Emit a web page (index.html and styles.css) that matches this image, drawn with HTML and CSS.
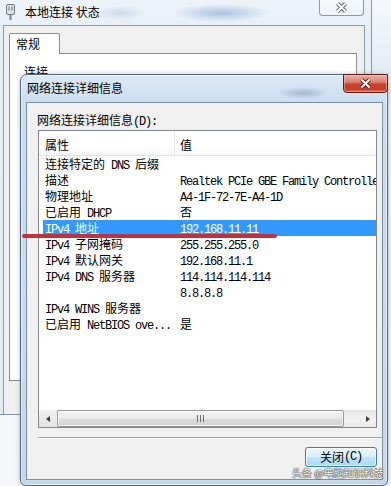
FILE: index.html
```html
<!DOCTYPE html>
<html lang="zh-CN">
<head>
<meta charset="utf-8">
<title>网络连接详细信息</title>
<link rel="stylesheet" href="styles.css">
</head>
<body>
  <section class="win back">
    <header class="tbar">
      <svg class="ticon" width="9" height="16" viewBox="0 0 9 16"><rect x="0.5" y="0.5" width="8" height="10" rx="1.5" fill="#dde1e6" stroke="#6f7780"/><rect x="2.5" y="2.5" width="1" height="4" fill="#6f7780"/><rect x="5.5" y="2.5" width="1" height="4" fill="#6f7780"/><rect x="3.5" y="11" width="2" height="5" fill="#7d858e"/></svg>
      <span class="ttext">本地连接 状态</span>
      <div class="xbtn inactive"><svg width="13" height="11" viewBox="0 0 13 11"><path d="M2.5 1.5 L10.5 9.5 M10.5 1.5 L2.5 9.5" stroke="#6a6a6a" stroke-width="4"/><path d="M2.5 1.5 L10.5 9.5 M10.5 1.5 L2.5 9.5" stroke="#fff" stroke-width="2"/></svg></div>
    </header>
    <div class="client">
      <div class="tabs"><div class="tab">常规</div></div>
      <div class="panel"><div class="grp">连接</div></div>
    </div>
  </section>

  <section class="win front">
    <header class="tbar">
      <span class="ttext">网络连接详细信息</span>
      <div class="xbtn red"><svg width="13" height="11" viewBox="0 0 13 11"><path d="M2.5 1.5 L10.5 9.5 M10.5 1.5 L2.5 9.5" stroke="#6b2018" stroke-width="4"/><path d="M2.5 1.5 L10.5 9.5 M10.5 1.5 L2.5 9.5" stroke="#fff" stroke-width="2"/></svg></div>
    </header>
    <div class="client">
      <div class="lbl">网络连接详细信息<span class="m">(D):</span></div>
      <div class="list">
        <div class="lhead"><div class="c1">属性</div><div class="c2">值</div></div>
        <div class="rows">
          <div class="row"><div class="c1">连接特定的<span class="m"> DNS </span>后缀</div><div class="c2"></div></div>
          <div class="row"><div class="c1">描述</div><div class="c2"><span class="m">Realtek PCIe GBE Family Controller</span></div></div>
          <div class="row"><div class="c1">物理地址</div><div class="c2"><span class="m">A4-1F-72-7E-A4-1D</span></div></div>
          <div class="row"><div class="c1">已启用<span class="m"> DHCP</span></div><div class="c2">否</div></div>
          <div class="row sel"><div class="c1"><span class="m">IPv4 </span>地址</div><div class="c2"><span class="m">192.168.11.11</span></div></div>
          <div class="row"><div class="c1"><span class="m">IPv4 </span>子网掩码</div><div class="c2"><span class="m">255.255.255.0</span></div></div>
          <div class="row"><div class="c1"><span class="m">IPv4 </span>默认网关</div><div class="c2"><span class="m">192.168.11.1</span></div></div>
          <div class="row"><div class="c1"><span class="m">IPv4 DNS </span>服务器</div><div class="c2"><span class="m">114.114.114.114</span></div></div>
          <div class="row"><div class="c1"></div><div class="c2"><span class="m">8.8.8.8</span></div></div>
          <div class="row"><div class="c1"><span class="m">IPv4 WINS </span>服务器</div><div class="c2"></div></div>
          <div class="row"><div class="c1">已启用<span class="m"> NetBIOS ove...</span></div><div class="c2">是</div></div>
        </div>
        <div class="hscroll">
          <div class="sbtn"><span class="tri left"></span></div>
          <div class="thumb"><span class="grip"></span></div>
          <div class="track"></div>
          <div class="sbtn"><span class="tri right"></span></div>
        </div>
      </div>
      <div class="sep"></div>
      <div class="foot"><div class="btn">关闭<span class="m">(C)</span></div></div>
    </div>
  </section>

  <div class="redline"></div>
  <div class="wm">头条 @电脑知识科技</div>
</body>
</html>
```
FILE: styles.css
```css
* { box-sizing: border-box; }
html, body { margin: 0; padding: 0; }
body {
  width: 391px;
  height: 486px;
  overflow: hidden;
  position: relative;
  background: linear-gradient(180deg, #f6f9fc 0px, #e3ecf4 70px, #f3f5f7 120px, #f5f6f7 100%);
  font-family: "Noto Sans CJK SC", sans-serif;
  font-size: 12px;
  color: #000;
}
.m {
  font-family: "Liberation Mono", monospace;
  font-size: 12px;
  letter-spacing: -1.2px;
}

/* windows */
.win {
  position: absolute;
  display: flex;
  flex-direction: column;
}
.tbar {
  position: relative;
  display: flex;
  align-items: flex-start;
  flex: none;
}
.ttext { line-height: 16px; white-space: nowrap; }

.xbtn {
  position: absolute;
  width: 45px;
  display: flex;
  align-items: center;
  justify-content: center;
  border-radius: 0 0 4px 4px;
}
.xbtn.inactive {
  top: 0;
  right: 7px;
  height: 21px;
  padding-top: 5px;
  border: 1px solid #8e99a5;
  border-top: none;
  background: linear-gradient(180deg, rgba(255,255,255,.6), rgba(240,245,250,.9));
}
.xbtn.red {
  top: -1px;
  right: -1px;
  height: 19px;
  border: 1px solid #5e1c15;
  background: linear-gradient(180deg, #eab0a2 0%, #dc8473 40%, #c8442f 55%, #c2402c 80%, #d5664f 100%);
  box-shadow: inset 0 0 0 1px rgba(255,210,200,.45);
}

/* back window */
.back {
  left: -5px;
  top: -6px;
  width: 377px;
  height: 421px;
  border: 1px solid #8796a6;
  border-radius: 6px;
  background: linear-gradient(180deg, #eef4fa 0%, #e6eef6 10%, #e3ecf5 100%);
}
.back .tbar {
  height: 30px;
  padding: 8px 0 0 10px;
  background:
    radial-gradient(ellipse 48px 9px at 225px 18px, rgba(150,180,215,.75), rgba(150,180,215,0)),
    radial-gradient(ellipse 24px 7px at 125px 18px, rgba(180,200,225,.6), rgba(180,200,225,0));
}
.back .ticon { margin-right: 10px; margin-top: 1px; }
.back .ttext { padding-top: 1px; }
.back .client {
  flex: 1;
  margin: 0 6px 0 7px;
  border: 1px solid #8f9baa;
  border-bottom: none;
  background: #f0f0f0;
  padding: 7px 7px 0 5px;
  display: flex;
  flex-direction: column;
}
.tabs { display: flex; height: 20px; position: relative; z-index: 1; }
.tab {
  width: 51px;
  height: 21px;
  background: #fff;
  border: 1px solid #898c95;
  border-bottom: none;
  border-radius: 2px 2px 0 0;
  padding-left: 6px;
  line-height: 19px;
}
.panel {
  height: 328px;
  background: #fff;
  border: 1px solid #898c95;
  padding: 10px 14px;
}
.grp { line-height: 16px; }

/* front window */
.front {
  left: 20px;
  top: 74px;
  width: 368px;
  height: 412px;
  border: 1px solid #52677e;
  border-radius: 7px 7px 6px 6px;
  background: linear-gradient(180deg, #dce9f6 0px, #cbdef0 28px, #c3d8ed 100%);
  box-shadow: 0 0 5px rgba(30,50,80,.3), inset 0 0 0 1px rgba(255,255,255,.55);
}
.front .tbar {
  height: 27px;
  padding: 5px 0 0 6px;
  background:
    radial-gradient(ellipse 26px 6px at 282px 18px, rgba(140,165,195,.7), rgba(140,165,195,0));
}
.front .client {
  flex: 1;
  margin: 0 4px 5px 5px;
  border: 1px solid #7b8ea3;
  background: #f0f0f0;
  padding-top: 9px;
  display: flex;
  flex-direction: column;
}
.lbl { line-height: 16px; padding-left: 10px; white-space: nowrap; }

.list {
  height: 298px;
  margin: 0 5px 0 11px;
  border: 1px solid #828790;
  background: #fff;
  display: flex;
  flex-direction: column;
  overflow: hidden;
}
.lhead {
  height: 25px;
  flex: none;
  display: flex;
  border-bottom: 1px solid #e2e3e6;
  background: linear-gradient(180deg, #fff 0%, #fff 60%, #f6f7f9 100%);
}
.lhead .c1 {
  width: 136px;
  border-right: 1px solid #e3e4e6;
  padding: 6px 0 0 6px;
  line-height: 16px;
}
.lhead .c2 { padding: 6px 0 0 5px; line-height: 16px; }

.rows { flex: 1; overflow: hidden; white-space: nowrap; }
.row {
  height: 16px;
  line-height: 16px;
  display: flex;
  margin-left: 4px;
  overflow: hidden;
}
.row .c1 { width: 137px; flex: none; padding-left: 2px; overflow: hidden; }
.row .c2 { flex: 1; overflow: hidden; }
.row.sel { background: #3399ff; color: #fff; }

.hscroll {
  height: 17px;
  flex: none;
  display: flex;
  background: linear-gradient(180deg, #e4e4e4, #f1f1f1 40%, #f1f1f1 70%, #e8e8e8);
}
.sbtn {
  width: 17px;
  flex: none;
  display: flex;
  align-items: center;
  justify-content: center;
}
.sbtn:first-child { background: linear-gradient(180deg, #f2f2f2, #e2e2e2); }
.tri { width: 0; height: 0; border-top: 3.5px solid transparent; border-bottom: 3.5px solid transparent; }
.tri.left { border-right: 4px solid #3c3c3c; }
.tri.right { border-left: 4px solid #3c3c3c; }
.thumb {
  width: 287px;
  flex: none;
  margin: 0 0 0 1px;
  border: 1px solid #979797;
  border-radius: 2px;
  background: linear-gradient(180deg, #f5f5f5 0%, #ececec 45%, #dcdcdc 55%, #d2d2d2 100%);
  box-shadow: inset 0 0 0 1px rgba(255,255,255,.7);
  display: flex;
  align-items: center;
  justify-content: center;
}
.grip {
  width: 7px;
  height: 7px;
  background: repeating-linear-gradient(90deg, #6f6f6f 0 1px, transparent 1px 3px);
}
.track { flex: 1; }

.sep {
  margin: 9px 0 0 11px;
  height: 2px;
  border-top: 1px solid #a0a0a0;
  border-bottom: 1px solid #fff;
  flex: none;
}
.foot { display: flex; justify-content: flex-end; padding-right: 5px; margin-top: 8px; }
.btn {
  width: 72px;
  height: 20px;
  border: 1px solid #3c7fb1;
  border-radius: 3px;
  background: linear-gradient(180deg, #eaf6fd 0%, #d9f0fc 48%, #bee6fd 52%, #a7d9f5 100%);
  box-shadow: inset 0 0 0 1px rgba(255,255,255,.75);
  display: flex;
  align-items: center;
  justify-content: center;
  line-height: 16px;
}

/* overlays */
.redline {
  position: absolute;
  left: 22px;
  top: 234px;
  width: 255px;
  height: 4px;
  border-radius: 2px;
  background: #c2303d;
}
.wm {
  position: absolute;
  left: 292px;
  top: 467px;
  white-space: nowrap;
  font-size: 10px;
  line-height: 11px;
  color: #fff;
  text-shadow: 0 0 1px #333, 0 0 1px #333, 0 0 1px #333;
}
```
